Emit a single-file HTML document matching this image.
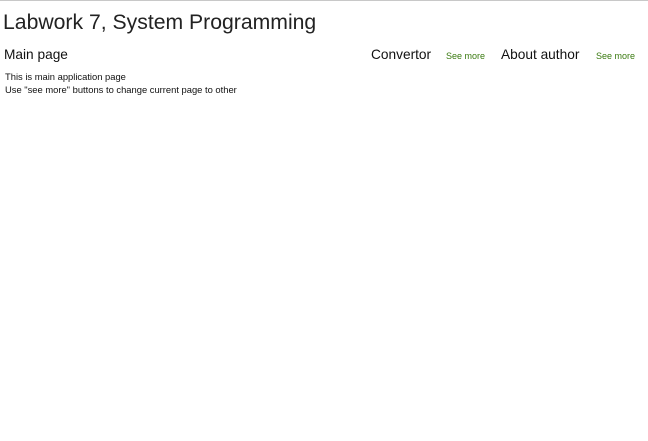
<!DOCTYPE html>
<html><head><style>
body{margin:0;width:648px;height:441px;background:#fff;border-top:1px solid #c8c8c8;box-sizing:border-box;font-family:"Liberation Sans",sans-serif;color:#111;position:relative;overflow:hidden}
div{position:absolute;white-space:nowrap}
.t{left:3px;top:10px;font-size:21.2px;color:#222}
.h{font-size:13.7px;top:46px}
.s{font-size:9px;color:#3a7a10;top:50px}
.p{font-size:9.4px;left:5px}
</style></head><body>
<div class="t">Labwork 7, System Programming</div>
<div class="h" style="left:4px">Main page</div>
<div class="p" style="top:70px">This is main application page</div>
<div class="p" style="top:83px">Use "see more" buttons to change current page to other</div>
<div class="h" style="left:371px">Convertor</div>
<div class="s" style="left:446px">See more</div>
<div class="h" style="left:501px">About author</div>
<div class="s" style="left:596px">See more</div>
</body></html>
